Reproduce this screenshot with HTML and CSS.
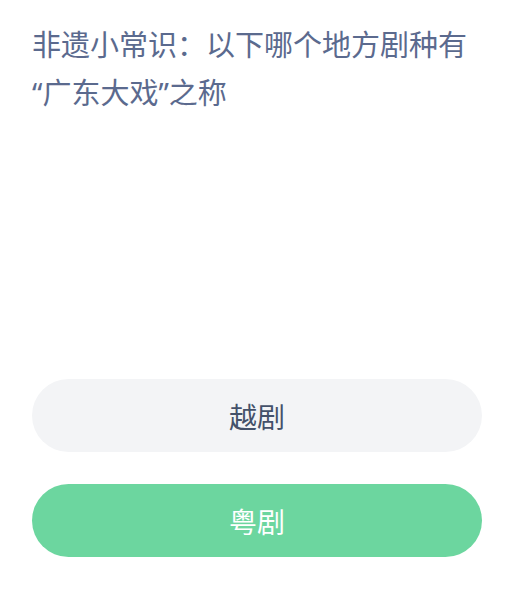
FILE: index.html
```html
<!DOCTYPE html>
<html lang="zh-CN">
<head>
<meta charset="utf-8">
<link rel="stylesheet" href="styles.css">
</head>
<body>
<main class="quiz">
  <h1 class="question">非遗小常识<span class="colon">：</span>以下哪个地方剧种有“广东大戏”之称</h1>
  <div class="options">
    <button class="option">越剧</button>
    <button class="option option-correct">粤剧</button>
  </div>
</main>
</body>
</html>
```

FILE: styles.css
```css
html, body {
  margin: 0;
  padding: 0;
  background: #ffffff;
}
body {
  width: 521px;
  height: 597px;
  overflow: hidden;
  font-family: "Noto Sans", "Noto Sans CJK SC", sans-serif;
}
.quiz {
  padding: 21px 32px 0 32px;
  display: flex;
  flex-direction: column;
}
.question {
  margin: 0;
  height: 96px;
  font-size: 29px;
  font-weight: 400;
  line-height: 48px;
  color: #5b6a8e;
  width: 440px;
}
.colon {
  font-family: "Noto Sans CJK JP", sans-serif;
  line-height: 1;
}
.options {
  margin-top: 262px;
  display: flex;
  flex-direction: column;
  gap: 32px;
}
.option {
  width: 450px;
  height: 73px;
  border: none;
  border-radius: 37px;
  background: #f3f4f6;
  color: #44516a;
  font-family: "Noto Sans", "Noto Sans CJK SC", sans-serif;
  font-size: 28px;
  font-weight: 400;
  padding: 0;
}
.option-correct {
  background: #6cd69f;
  color: #ffffff;
}
```
